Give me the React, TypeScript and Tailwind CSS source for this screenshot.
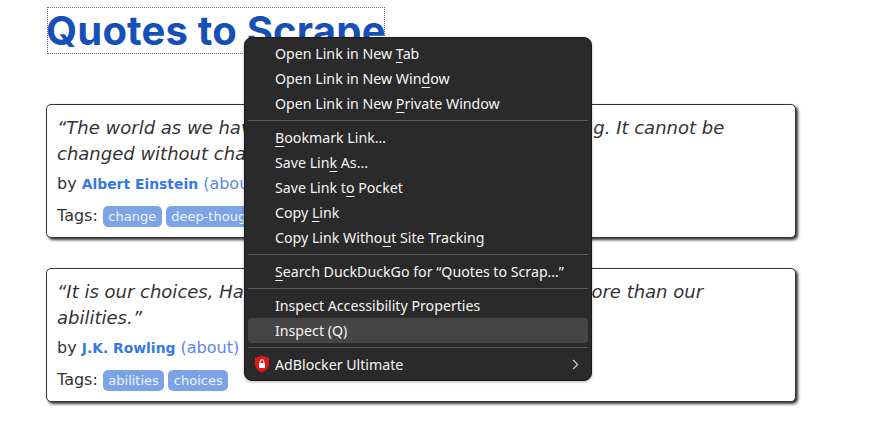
import { ChevronRight } from "lucide-react";
import type { ReactNode } from "react";

function Tag({ children }: { children: ReactNode }) {
  return (
    <span className="rounded-[5px] bg-[#7ca3e6] px-[5.5px] h-[21px] leading-[21px] text-[13px] text-[#eef3fc]">
      {children}
    </span>
  );
}

function Quote({
  text,
  author,
  tags,
  className,
}: {
  text: string;
  author: string;
  tags: string[];
  className?: string;
}) {
  return (
    <div
      className={`h-[134px] w-[750px] rounded-[5px] border border-[#333] bg-white px-[10px] pt-[10px] shadow-[2px_2px_3px_#333] ${className}`}
    >
      <p className="text-[18px] italic leading-[26px] text-[#333]">{text}</p>
      <p className="mt-[5px] h-[24px] text-[16px] leading-[24px] text-[#333]">
        by <span className="text-[13.9px] font-bold text-[#3677e8]">{author}</span>{" "}
        <span className="text-[#5a86e8]">(about)</span>
      </p>
      <div className="mt-[8px] flex items-center gap-[4px] text-[16px] text-[#333]">
        <span className="mr-[1px]">Tags:</span>
        {tags.map((t) => (
          <Tag key={t}>{t}</Tag>
        ))}
      </div>
    </div>
  );
}

function Item({ children, active }: { children: ReactNode; active?: boolean }) {
  return (
    <div className={`h-[25px] rounded-[4px] pl-[27px] leading-[25px] ${active ? "bg-[#454545]" : ""}`}>
      {children}
    </div>
  );
}

function Key({ children }: { children: ReactNode }) {
  return <span className="underline decoration-1 underline-offset-[3px]">{children}</span>;
}

function Sep({ className }: { className: string }) {
  return <div className={`h-px bg-[#5a5a5a] ${className}`} />;
}

export default function App() {
  return (
    <div className="relative h-[423px] w-[896px] overflow-hidden bg-white pl-[46px] pt-[7px] font-['DejaVu_Sans',sans-serif]">
      <h1 className="ml-px h-[47px] w-[338px] whitespace-nowrap border border-dotted border-[#5a6a90] indent-[-2px] font-['Inter',sans-serif] text-[40px] font-bold leading-[46px] tracking-[0.2px] text-[#174fb8]">
        Quotes to Scrape
      </h1>
      <Quote
        className="mt-[50px]"
        text="“The world as we have created it is a process of our thinking. It cannot be changed without changing our thinking.”"
        author="Albert Einstein"
        tags={["change", "deep-thoughts", "thinking", "world"]}
      />
      <Quote
        className="mt-[30px]"
        text="“It is our choices, Harry, that show what we truly are, far more than our abilities.”"
        author="J.K. Rowling"
        tags={["abilities", "choices"]}
      />

      {/* context menu */}
      <div className="absolute left-[244px] top-[37px] h-[344px] w-[348px] rounded-[8px] border border-[#1c1c1c] bg-[#2a2a2a] px-[3px] pt-[3px] font-['Noto_Sans',sans-serif] text-[14.2px] text-[#f4f4f4] shadow-[0_1px_3px_rgba(0,0,0,0.3)]">
        <Item>
          Open Link in New <Key>T</Key>ab
        </Item>
        <Item>
          Open Link in New Win<Key>d</Key>ow
        </Item>
        <Item>
          Open Link in New <Key>P</Key>rivate Window
        </Item>
        <Sep className="mb-[3.5px] mt-[4px]" />
        <Item>
          <Key>B</Key>ookmark Link…
        </Item>
        <Item>
          Save Lin<Key>k</Key> As…
        </Item>
        <Item>
          Save Link t<Key>o</Key> Pocket
        </Item>
        <Item>
          Copy <Key>L</Key>ink
        </Item>
        <Item>
          Copy Link Witho<Key>u</Key>t Site Tracking
        </Item>
        <Sep className="my-[4px]" />
        <Item>
          <Key>S</Key>earch DuckDuckGo for “Quotes to Scrap…”
        </Item>
        <Sep className="my-[4px]" />
        <Item>Inspect Accessibility Properties</Item>
        <Item active>Inspect (Q)</Item>
        <Sep className="my-[4px]" />
        <div className="relative">
          <Item>AdBlocker Ultimate</Item>
          <svg viewBox="0 0 16 18" className="absolute left-[6px] top-[3px] h-[18px] w-[16px]">
            <path d="M8 0.5 L15 3 V9 C15 13 12 16 8 17.5 C4 16 1 13 1 9 V3 Z" fill="#e0161b" />
            <rect x="5" y="8" width="6" height="5" rx="0.6" fill="#fff" />
            <path d="M6.2 8 V6.5 a1.8 1.8 0 0 1 3.6 0 V8" fill="none" stroke="#fff" strokeWidth="1.1" />
          </svg>
          <ChevronRight className="absolute right-[4px] top-[4px] h-[17px] w-[17px] text-[#d0d0d0]" strokeWidth={1.5} />
        </div>
      </div>
    </div>
  );
}
